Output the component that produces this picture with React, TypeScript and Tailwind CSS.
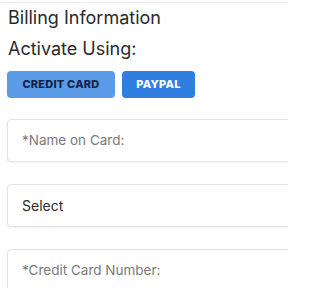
import React from "react";

// ── Billing form ──────────────────────────────────────────────────────────────

function Field({ placeholder, value }: { placeholder?: string; value?: string }) {
  return (
    <div className="h-[43px] w-[300px] shrink-0 rounded-[4px] border border-[#e4e4e4] bg-white shadow-[0_1px_2px_rgba(0,0,0,0.06)] flex items-center pl-[14px]">
      {value ? (
        <span className="text-[14px] text-[#2b2b2b]">{value}</span>
      ) : (
        <span className="text-[13.5px] text-[#7a7a7a]">{placeholder}</span>
      )}
    </div>
  );
}

export default function App() {
  return (
    <div
      className="w-[288px] h-[288px] overflow-hidden bg-white"
      style={{ fontFamily: "Inter, 'Noto Sans', sans-serif" }}
    >
      <div className="h-[2px]" />
      <div className="h-px bg-[#ececec]" />

      <div className="pl-[7px]">
        {/* Header */}
        <h2 className="mt-[3px] pl-px text-[18px] leading-[24px] text-[#2a2a2a]">Billing Information</h2>
        <p className="mt-[7px] pl-px text-[18px] leading-[24px] text-[#2a2a2a]">Activate Using:</p>

        {/* Payment method buttons */}
        <div className="mt-[10px] flex gap-[7px]">
          <button className="h-[27px] w-[108px] rounded-[4px] bg-[#5b9be8] text-[11px] font-extrabold tracking-[0.02em] text-[#14234a]">
            CREDIT CARD
          </button>
          <button className="h-[27px] w-[73px] rounded-[4px] bg-[#2f7ee0] text-[11px] font-extrabold tracking-[0.02em] text-white">
            PAYPAL
          </button>
        </div>

        {/* Inputs */}
        <div className="mt-[21px] flex flex-col gap-[22px]">
          <Field placeholder="*Name on Card:" />
          <Field value="Select" />
          <Field placeholder="*Credit Card Number:" />
        </div>
      </div>
    </div>
  );
}
